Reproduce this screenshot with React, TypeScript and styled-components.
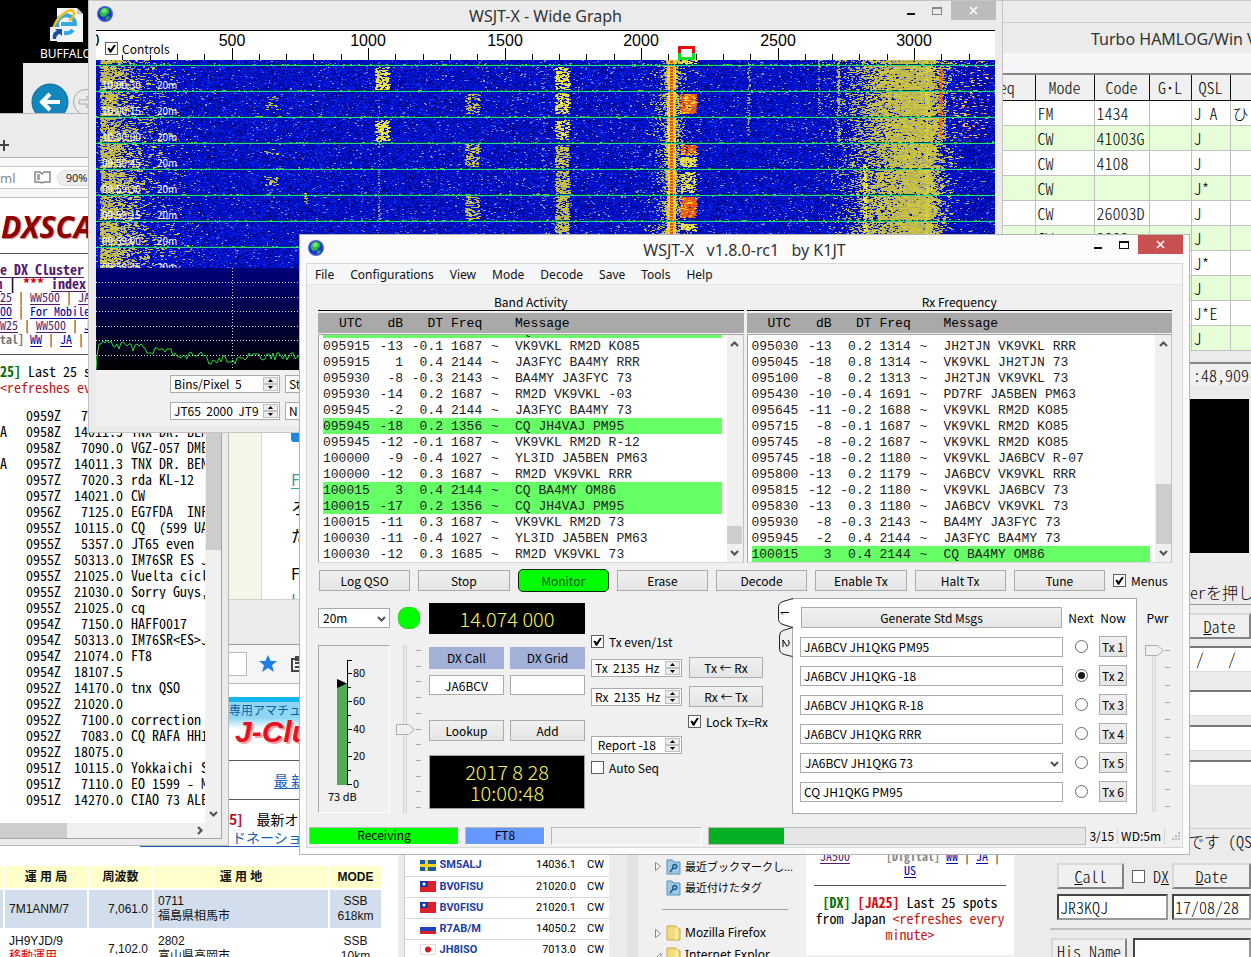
import React, { useState } from "react";
import styled, { createGlobalStyle, css } from "styled-components";

/* ---------- shared type ---------- */

const ui = css`
  font-family: "Noto Sans CJK JP", sans-serif;
  font-size: 12px;
  line-height: 16px;
`;
const caption = css`
  font-family: "Noto Sans", "Noto Sans CJK JP", sans-serif;
`;
const halfWidth = css`
  font-family: "Noto Sans CJK JP", monospace;
  font-feature-settings: "hwid";
`;
const halfWidthLarge = css`
  ${halfWidth}
  font-size: 16px;
  font-weight: 300;
`;

const Global = createGlobalStyle`
  *, *::before, *::after { box-sizing: border-box; }
  html, body { margin: 0; background: #000; }
  body { ${ui} color: #000; overflow: hidden; }
  button, input, select { font: inherit; color: inherit; margin: 0; padding: 0; border-radius: 0; }
  table { border-collapse: collapse; border-spacing: 0; }
  td, th { padding: 0; text-align: left; font-weight: inherit; }
  svg { display: block; flex: none; }
  p { margin: 0; }
`;

/* ---------- desktop and window frames ---------- */

const Desktop = styled.main`
  position: relative;
  width: 100%;
  height: 100vh;
  overflow: hidden;
  background: #000;
`;

const Pane = styled.section<{ $x: number; $y: number; $w?: number; $h?: number; $bg?: string }>`
  position: absolute;
  left: ${(p) => p.$x}px;
  top: ${(p) => p.$y}px;
  ${(p) => (p.$w ? `width: ${p.$w}px;` : "right: 0;")}
  ${(p) => (p.$h ? `height: ${p.$h}px;` : "bottom: 0;")}
  background: ${(p) => p.$bg ?? "#ebebeb"};
  overflow: hidden;
`;

const Frame = styled.section<{ $x: number; $y: number; $w: number; $active?: boolean }>`
  position: absolute;
  left: ${(p) => p.$x}px;
  top: ${(p) => p.$y}px;
  width: ${(p) => p.$w}px;
  display: flex;
  flex-direction: column;
  padding: 0 6px 6px;
  border: 1px solid ${(p) => (p.$active ? "#b4b4b4" : "#c4c4c4")};
  background: ${(p) => (p.$active ? "#fbfbfb" : "#ebebeb")};
`;

const TitleBar = styled.header`
  display: grid;
  grid-template-columns: 1fr auto 1fr;
  height: 28px;
`;
const TitleIcon = styled.div`
  padding: 5px 2px;
`;
const TitleText = styled.h1`
  ${caption}
  margin: 0;
  font-size: 16px;
  line-height: 30px;
  font-weight: 400;
  color: #333;
  white-space: pre;
`;
const WindowButtons = styled.div`
  display: flex;
  justify-content: flex-end;
  align-items: flex-start;
`;
const WindowButton = styled.button<{ $close?: string }>`
  width: ${(p) => (p.$close ? 45 : 27)}px;
  height: 19px;
  border: 0;
  background: ${(p) => p.$close ?? "transparent"};
  display: flex;
  align-items: center;
  justify-content: center;
`;

const Globe = () => (
  <svg width="16" height="16" viewBox="0 0 16 16">
    <circle cx="8" cy="8" r="8" fill="#4a62e0" />
    <circle cx="8" cy="8" r="6.8" fill="#2038c8" />
    <path d="M3 5C4 2 8 1 10 2c2 1 3 3 2 4 0 2-2 2-3 4-1 1-4 1-5 0S2 7 3 5z" fill="#2fb84a" />
    <path d="M5 4c1-2 4-2 5 0 0 2-3 4-4 3s-2-2-1-3z" fill="#6fe868" />
    <path d="M9 11c1-1 3-1 4 0-1 2-2 3-4 3z" fill="#2aa84a" />
    <path d="M2 9c1 0 2 1 2 3-1-1-2-2-2-3z" fill="#101f90" />
  </svg>
);

function Title({ text, active }: { text: string; active?: boolean }) {
  const ink = active ? "#111" : "#888";
  return (
    <TitleBar>
      <TitleIcon><Globe /></TitleIcon>
      <TitleText>{text}</TitleText>
      <WindowButtons>
        <WindowButton aria-label="Minimize">
          <svg width="10" height="10"><path d="M1 7h8v2H1z" fill="#111" /></svg>
        </WindowButton>
        <WindowButton aria-label="Maximize">
          <svg width="11" height="10" shapeRendering="crispEdges">
            <path d="M.5 1.5h9v7h-9z" fill="none" stroke={ink} />
            <path d="M0 1h10v2H0z" fill={ink} />
          </svg>
        </WindowButton>
        <WindowButton aria-label="Close" $close={active ? "#c75050" : "#bcbcbc"}>
          <svg width="9" height="9"><path d="M1 1l7 7M8 1l-7 7" stroke="#fff" strokeWidth="1.6" /></svg>
        </WindowButton>
      </WindowButtons>
    </TitleBar>
  );
}

/* ---------- controls ---------- */

const CheckLabel = styled.label<{ $gap?: number }>`
  display: inline-flex;
  align-items: center;
  gap: ${(p) => p.$gap ?? 5}px;
  height: 13px;
  white-space: nowrap;
`;
const CheckBox = styled.input.attrs({ type: "checkbox" })`
  appearance: none;
  position: relative;
  flex: none;
  width: 13px;
  height: 13px;
  border: 1px solid #606060;
  background: #fff;
  &:checked::after {
    content: "";
    position: absolute;
    inset: 1px;
    background: #000;
    clip-path: polygon(4% 48%, 24% 40%, 40% 62%, 78% 8%, 98% 14%, 46% 96%, 32% 96%);
  }
`;
const Radio = styled.input.attrs({ type: "radio" })`
  appearance: none;
  width: 13px;
  height: 13px;
  border: 1px solid #666;
  border-radius: 50%;
  background: #fff;
  display: grid;
  place-items: center;
  &:checked::after {
    content: "";
    width: 7px;
    height: 7px;
    border-radius: 50%;
    background: #1a1a1a;
  }
`;
const Push = styled.button<{ $on?: boolean; $w?: number }>`
  ${(p) => (p.$w ? `width: ${p.$w}px; flex: none;` : "flex: 1; min-width: 0;")}
  height: 21px;
  line-height: 19px;
  text-align: center;
  white-space: nowrap;
  border: 1px solid #acacac;
  background: linear-gradient(#f0f0f0, #e5e5e5);
  ${(p) =>
    p.$on &&
    css`
      height: 23px;
      margin: -1px 0;
      background: #00ff00;
      border-color: #002800;
      border-radius: 5px;
      color: #04570a;
    `}
`;
const Field = styled.input<{ $center?: boolean }>`
  width: 100%;
  min-width: 0;
  height: 20px;
  padding: 0 3px;
  border: 1px solid #ababab;
  background: #fff;
  text-align: ${(p) => (p.$center ? "center" : "left")};
`;
const SelectWrap = styled.div`
  position: relative;
  height: 20px;
  > svg { position: absolute; right: 4px; top: 8px; pointer-events: none; }
`;
const Select = styled.select`
  appearance: none;
  width: 100%;
  height: 20px;
  padding: 0 4px;
  border: 1px solid #ababab;
  background: #fff;
`;
const Chevron = ({ d = "M1 1l3.5 3.5L8 1" }: { d?: string }) => (
  <svg width="9" height="6"><path d={d} fill="none" stroke="#505050" strokeWidth="2" /></svg>
);
const Spin = styled.div`
  display: flex;
  flex: none;
  width: 91px;
  height: 18px;
  border: 1px solid #ababab;
  background: #fff;
`;
const SpinInput = styled.input`
  flex: 1;
  min-width: 0;
  border: 0;
  padding: 0 3px;
  line-height: 14px;
  background: transparent;
`;
const SpinArrows = styled.div`
  display: flex;
  flex-direction: column;
  width: 15px;
  margin: 1px;
`;
const SpinArrow = styled.button`
  flex: 1;
  min-height: 0;
  display: grid;
  place-items: center;
  border: 1px solid #c0c0c0;
  background: #ececec;
`;
function SpinBox({ value, label }: { value: string; label: string }) {
  return (
    <Spin>
      <SpinInput aria-label={label} defaultValue={value} />
      <SpinArrows>
        <SpinArrow aria-label="Up"><svg width="5" height="3"><path d="M0 3L2.5 0L5 3z" /></svg></SpinArrow>
        <SpinArrow aria-label="Down"><svg width="5" height="3"><path d="M0 0h5L2.5 3z" /></svg></SpinArrow>
      </SpinArrows>
    </Spin>
  );
}

const SliderBox = styled.div`
  position: relative;
  width: 25px;
  height: 168px;
`;
const Range = styled.input.attrs({ type: "range" })`
  position: absolute;
  inset: 0;
  width: 100%;
  height: 100%;
  opacity: 0;
  writing-mode: vertical-lr;
  direction: rtl;
`;
function Slider({ at, label, pwr }: { at: number; label: string; pwr?: boolean }) {
  const start = pwr ? 6 : 5;
  const count = pwr ? 9 : 10;
  const step = (162 - start) / count;
  const ticks = Array.from({ length: count + 1 }, (_, i) => Math.round(start + i * step));
  return (
    <SliderBox>
      <svg width="25" height="168">
        <path d={`M7.5 ${pwr ? start : 0}.5h3V167.5h-3z`} fill="#e7eaea" stroke="#d6d6d6" />
        <path d={ticks.map((t) => `M20 ${t}.5h5`).join("")} stroke="#a8a8a8" />
        <path d={`M.5 ${at - 5}.5h12l6 5l-6 5h-12z`} fill="#f0f0f0" stroke="#acacac" />
      </svg>
      <Range aria-label={label} defaultValue={50} />
    </SliderBox>
  );
}

const VScroll = styled.div`
  flex: none;
  width: 16px;
  display: flex;
  flex-direction: column;
  align-items: center;
  padding: 6px 0;
  background: #f0f0f0;
`;
const Thumb = styled.div<{ $h: number; $push?: number }>`
  width: 15px;
  height: ${(p) => p.$h}px;
  margin: auto 0 ${(p) => p.$push ?? 5}px;
  background: #cdcdcd;
`;

/* ---------- waterfall ---------- */

function mulberry(seed: number) {
  return () => {
    seed = (seed + 0x6d2b79f5) | 0;
    let t = Math.imul(seed ^ (seed >>> 15), 1 | seed);
    t = (t + Math.imul(t ^ (t >>> 7), 61 | t)) ^ t;
    return ((t ^ (t >>> 14)) >>> 0) / 4294967296;
  };
}

const WF_W = 899;
const WF_H = 208;
const periods = [5, 31, 57, 83, 109, 135, 161, 187];
const YELLOW = ["#c4be48", "#b2ae58", "#cfc840"];
const BRIGHT = ["#e6e040", "#d8d058", "#f0ea30"];
const HOT = ["#f06010", "#e8601c", "#f0d020", "#f04a08"];

type Burst = [number, number, number, number, number, string[]];
const bursts: Burst[] = [
  [279, 293, 7, 30, 0.55, BRIGHT], [279, 293, 60, 82, 0.6, BRIGHT],
  [369, 383, 34, 55, 0.32, YELLOW], [369, 383, 84, 107, 0.4, YELLOW], [369, 383, 136, 160, 0.4, YELLOW],
  [459, 473, 7, 30, 0.55, BRIGHT], [459, 473, 33, 54, 0.42, BRIGHT], [459, 473, 60, 80, 0.45, BRIGHT],
  [459, 473, 85, 108, 0.55, YELLOW], [459, 473, 111, 134, 0.55, YELLOW], [459, 473, 136, 160, 0.55, YELLOW],
  [459, 473, 162, 180, 0.55, YELLOW],
  [584, 600, 0, 4, 0.6, BRIGHT], [584, 600, 34, 54, 0.92, HOT], [584, 600, 85, 95, 0.8, HOT], [584, 600, 97, 107, 0.8, BRIGHT],
  [585, 599, 112, 133, 0.5, BRIGHT], [584, 600, 137, 158, 0.92, HOT], [585, 600, 164, 171, 0.7, BRIGHT],
  [168, 181, 36, 50, 0.2, YELLOW], [168, 181, 88, 98, 0.12, YELLOW], [168, 181, 115, 126, 0.3, YELLOW],
  [282, 284, 0, 180, 0.3, ["#8a96c0"]], [447, 449, 0, 180, 0.15, ["#8a96c0"]],
  [651, 654, 0, 80, 0.4, ["#9aa08a"]], [722, 724, 0, 55, 0.5, ["#9aa08a"]], [741, 744, 0, 82, 0.65, ["#b0b070"]],
  [767, 771, 105, 180, 0.7, BRIGHT], [829, 832, 0, 180, 0.85, ["#dcd838", "#d0cc40"]],
  [843, 846, 9, 79, 0.93, ["#e85010", "#f08020", "#e86010"]],
  [846, 850, 10, 79, 0.45, YELLOW], [838, 843, 10, 79, 0.45, YELLOW],
  [856, 893, 1, 78, 0.05, ["#f08030", "#f0a060", "#f0d060"]],
  [208, 211, 133, 144, 0.7, YELLOW],
];

function strength(x: number, y: number) {
  let d = 0;
  if (x >= 4 && x < 20) d = 0.68;
  else if (x >= 20 && x < 120) d = 0.5 * Math.exp(-(x - 20) / 24);
  const m = Math.abs(x - 575);
  const bulge = 0.75 + 0.25 * Math.sin(((y - 5) / 26) * Math.PI * 2 - 1);
  if (m < 30) d = Math.max(d, Math.min(1, 1.1 * Math.exp(-(m - 2) / (7 * bulge))));
  if (x > 690) {
    const r =
      x < 805 ? 0.82 * Math.exp(-Math.pow((805 - x) / 42, 2)) : x < 836 ? 0.9 : 0.75 * Math.exp(-(x - 836) / 9);
    d = Math.max(d, r);
  }
  return d;
}

function paintWaterfall() {
  const rnd = mulberry(1407);
  const out: Record<string, string> = {};
  const pick = (a: string[]) => a[Math.floor(rnd() * a.length)];
  for (let y = 0; y < WF_H; y++) {
    let prev = "";
    let from = 0;
    let x = 0;
    const flush = (to: number) => {
      if (prev) out[prev] = (out[prev] ?? "") + `M${from} ${y}h${to - from}v1h${from - to}z`;
    };
    while (x < WF_W) {
      const wide = x < 80 || x > 750;
      let step = rnd() < 0.5 ? 1 : 2;
      let c = "";
      const hit = bursts.find((b) => x >= b[0] && x < b[1] && y >= b[2] && y < b[3]);
      const m = Math.abs(x - 575);
      const s = strength(x, y);
      if (hit && rnd() < hit[4]) {
        c = pick(hit[5]);
        if (hit[1] - hit[0] > 10) step += 1;
      } else if (m <= 1) {
        c = y % 3 ? "#e84a10" : "#f0b020";
        step = 1;
      } else if (m <= 4) {
        c = rnd() < 0.75 ? pick(BRIGHT) : "#d8a828";
        step = 1;
      } else if (rnd() < s) {
        c = pick(YELLOW);
        if (wide && rnd() < 0.4) step += 2;
      } else {
        const r = rnd();
        const haze = x > 380 && x < 570 ? 0.05 : x > 690 ? 0.03 : 0.025;
        const gloom = x > 865 ? 0.5 : 0.27;
        if (r < gloom) c = "#0008a4";
        else if (r < gloom + 0.06) c = "#00045e";
        else if (r > 1 - haze - s * 0.3) c = rnd() < 0.5 ? "#8c9ad0" : "#6474d8";
        else if (r > 0.88) c = "#1830ea";
      }
      if (periods.includes(y + 1) && rnd() < 0.75) c = rnd() < 0.2 ? "#58d028" : "#063c50";
      if (c !== prev) {
        flush(x);
        prev = c;
        from = x;
      }
      x += step;
    }
    flush(WF_W);
  }
  return Object.entries(out);
}
const waterfallPaths = paintWaterfall();

const trace = (() => {
  const rnd = mulberry(20);
  let d = "M0 102L1 88L3 76";
  for (let x = 5; x < WF_W; x += 2) {
    const base = x < 12 ? 74 : x < 90 ? 75 + ((x - 12) / 78) * 12 : x > 112 && x < 140 ? 92 : 88;
    d += `L${x} ${Math.round(base + (rnd() - 0.5) * 9)}`;
  }
  return d;
})();

const times = ["10:00:30", "10:00:15", "10:00:00", "09:59:45", "09:59:30", "09:59:15", "09:59:00", "09:58:45"];

const GraphFont = styled.g`
  font-family: "Noto Sans CJK JP", sans-serif;
  font-size: 10px;
  fill: #fff;
`;
const ScaleFont = styled.g`
  font-family: "Liberation Sans", sans-serif;
  font-size: 16px;
  text-anchor: middle;
`;
const GraphScale = styled.div`
  position: relative;
  height: 30px;
  border-top: 1px solid #000;
  background: #fff;
`;
const ControlsToggle = styled.div`
  position: absolute;
  left: 9px;
  top: 11px;
  display: flex;
  background: #fff;
`;
const GraphClient = styled.div`
  margin: 1px 1px 0 1px;
  overflow: hidden;
  background: #f0f0f0;
`;
const GraphControls = styled.div`
  display: grid;
  grid-template-columns: 110px 110px;
  gap: 9px 5px;
  padding: 5px 0 6px 74px;
  > div { width: auto; }
`;

function WideGraph() {
  const ticks = Array.from({ length: 32 }, (_, i) => i + 1);
  return (
    <Frame $x={88} $y={0} $w={915}>
      <Title text="WSJT-X - Wide Graph" />
      <GraphClient>
        <GraphScale>
          <svg width={WF_W} height="29">
            <ScaleFont>
              <text x="-1" y="15">0</text>
              {[1, 2, 3, 4, 5, 6].map((i) => (
                <text key={i} x={Math.round(i * 136.5 - 1)} y="15">{i * 500}</text>
              ))}
            </ScaleFont>
            <path
              d={ticks.map((i) => `M${Math.round(i * 27.3) - 1}.5 ${i % 5 ? 23 : 17}V29`).join("")}
              stroke="#000"
            />
            <path d="M583.5 22v-5.5h14V22" fill="#fff" stroke="#e80c10" strokeWidth="3" />
            <path d="M583.5 22v5.5h14V22" fill="#fff" stroke="#10e020" strokeWidth="3" />
          </svg>
          <ControlsToggle>
            <CheckLabel $gap={4}><CheckBox defaultChecked />Controls</CheckLabel>
          </ControlsToggle>
        </GraphScale>
        <svg width={WF_W} height={WF_H} shapeRendering="crispEdges">
          <rect width={WF_W} height={WF_H} fill="#0012d2" />
          {waterfallPaths.map(([color, d]) => <path key={color} d={d} fill={color} />)}
          {periods.map((y) => <rect key={y} y={y} width={WF_W} height="1" fill="#28d890" />)}
          <GraphFont>
            {times.map((t, i) => (
              <React.Fragment key={t}>
                <text x="6" y={29 + i * 26}>{t}</text>
                <text x="61" y={29 + i * 26}>20m</text>
              </React.Fragment>
            ))}
          </GraphFont>
        </svg>
        <svg width={WF_W} height="102">
          <defs>
            <linearGradient id="sky" x1="0" y1="0" x2="0" y2="1">
              <stop offset="0" stopColor="#00007c" />
              <stop offset="1" stopColor="#000" />
            </linearGradient>
          </defs>
          <rect width={WF_W} height="102" fill="url(#sky)" />
          <path
            d={[14, 29, 43, 58, 72, 87].map((y) => `M0 ${y}.5H${WF_W}`).join("") + "M136.5 0V102"}
            stroke="#d8d8e8" strokeDasharray="1 2" shapeRendering="crispEdges"
          />
          <path d={trace} fill="none" stroke="#28d838" />
        </svg>
        <GraphControls>
          <SpinBox label="Bins per pixel" value="Bins/Pixel  5" />
          <SpinBox label="Start" value="Start 0 Hz" />
          <SpinBox label="Split" value="JT65  2000  JT9" />
          <SpinBox label="Averages" value="N Avg 5" />
        </GraphControls>
      </GraphClient>
    </Frame>
  );
}

/* ---------- WSJT-X main window ---------- */

const Client = styled.div`
  border: 1px solid #d6d6d6;
  background: #f0f0f0;
`;
const MenuBar = styled.nav`
  ${caption}
  display: flex;
  gap: 16px;
  height: 21px;
  padding: 1px 8px 0;
  background: #f5f6f7;
  border-bottom: 1px solid #e6e6e6;
`;
const MenuItem = styled.button`
  border: 0;
  background: none;
  line-height: 19px;
  color: #111;
`;
const Work = styled.div`
  padding: 9px 10px 0 11px;
`;
const Lists = styled.div`
  display: flex;
  gap: 3px;
`;
const ListPane = styled.section`
  flex: 1;
  min-width: 0;
`;
const ListTitle = styled.h2`
  margin: 0;
  height: 17px;
  font-size: 12px;
  line-height: 15px;
  font-weight: 400;
  text-align: center;
  border-bottom: 1px solid #000;
`;
const ListHead = styled.div`
  height: 20px;
  margin: 2px 0 1px;
  padding: 2px 5px;
  background: #a9a9a9;
`;
const ListBox = styled.div`
  display: flex;
  height: 229px;
  border: 1px solid #a4a4a4;
  border-bottom-color: #d8d8d8;
  border-right-color: #c0c0c0;
  background: #fff;
`;
const ListRows = styled.div`
  flex: 1;
  display: flex;
  flex-direction: column;
  justify-content: flex-end;
  overflow: hidden;
  padding: 0 5px 0 4px;
`;
const Decodes = styled.table`
  width: 100%;
  table-layout: fixed;
  font-family: "Liberation Mono", monospace;
  font-size: 13px;
  line-height: 14px;
  white-space: pre;
  td, th { height: 16px; padding-top: 2px; }
  td:nth-child(2), td:nth-child(3), th:nth-child(2), th:nth-child(3) { text-align: right; }
`;
const DecodeRow = styled.tr<{ $cq?: boolean }>`
  background: ${(p) => (p.$cq ? "#66ff66" : "transparent")};
  color: #222;
`;
const HeadUtc = styled.th`
  text-indent: 16px;
`;

type Decode = [string, string, string, string, string];
const band: Decode[] = [
  ["095915", "-6", "0.2", "1356", "CQ JH4VAJ PM95"],
  ["095915", "-13", "-0.1", "1687", "VK9VKL RM2D KO85"],
  ["095915", "1", "0.4", "2144", "JA3FYC BA4MY RRR"],
  ["095930", "-8", "-0.3", "2143", "BA4MY JA3FYC 73"],
  ["095930", "-14", "0.2", "1687", "RM2D VK9VKL -03"],
  ["095945", "-2", "0.4", "2144", "JA3FYC BA4MY 73"],
  ["095945", "-18", "0.2", "1356", "CQ JH4VAJ PM95"],
  ["095945", "-12", "-0.1", "1687", "VK9VKL RM2D R-12"],
  ["100000", "-9", "-0.4", "1027", "YL3ID JA5BEN PM63"],
  ["100000", "-12", "0.3", "1687", "RM2D VK9VKL RRR"],
  ["100015", "3", "0.4", "2144", "CQ BA4MY OM86"],
  ["100015", "-17", "0.2", "1356", "CQ JH4VAJ PM95"],
  ["100015", "-11", "0.3", "1687", "VK9VKL RM2D 73"],
  ["100030", "-11", "-0.4", "1027", "YL3ID JA5BEN PM63"],
  ["100030", "-12", "0.3", "1685", "RM2D VK9VKL 73"],
];
const rx: Decode[] = [
  ["095030", "-13", "0.2", "1314", "JH2TJN VK9VKL RRR"],
  ["095045", "-18", "0.8", "1314", "VK9VKL JH2TJN 73"],
  ["095100", "-8", "0.2", "1313", "JH2TJN VK9VKL 73"],
  ["095430", "-10", "-0.4", "1691", "PD7RF JA5BEN PM63"],
  ["095645", "-11", "-0.2", "1688", "VK9VKL RM2D KO85"],
  ["095715", "-8", "-0.1", "1687", "VK9VKL RM2D KO85"],
  ["095745", "-8", "-0.2", "1687", "VK9VKL RM2D KO85"],
  ["095745", "-18", "-0.2", "1180", "VK9VKL JA6BCV R-07"],
  ["095800", "-13", "0.2", "1179", "JA6BCV VK9VKL RRR"],
  ["095815", "-12", "-0.2", "1180", "VK9VKL JA6BCV 73"],
  ["095830", "-13", "0.3", "1180", "JA6BCV VK9VKL 73"],
  ["095930", "-8", "-0.3", "2143", "BA4MY JA3FYC 73"],
  ["095945", "-2", "0.4", "2144", "JA3FYC BA4MY 73"],
  ["100015", "3", "0.4", "2144", "CQ BA4MY OM86"],
];

const DecodeCols = () => (
  <colgroup>
    <col width="48" /><col width="32" /><col width="40" /><col width="8" />
    <col width="40" /><col width="24" /><col />
  </colgroup>
);

function DecodeList({ title, rows, thumb }: { title: string; rows: Decode[]; thumb: number }) {
  return (
    <ListPane>
      <ListTitle>{title}</ListTitle>
      <ListHead>
        <Decodes>
          <DecodeCols />
          <thead>
            <tr><HeadUtc>UTC</HeadUtc><th>dB</th><th>DT</th><th /><th>Freq</th><th /><th>Message</th></tr>
          </thead>
        </Decodes>
      </ListHead>
      <ListBox>
        <ListRows>
          <Decodes>
            <DecodeCols />
            <tbody>
              {rows.map((r, i) => (
                <DecodeRow key={i} $cq={r[4].startsWith("CQ")}>
                  <td>{r[0]}</td><td>{r[1]}</td><td>{r[2]}</td><td /><td>{r[3]}</td><td>~</td><td>{r[4]}</td>
                </DecodeRow>
              ))}
            </tbody>
          </Decodes>
        </ListRows>
        <VScroll>
          <Chevron d="M1 5l3.5-3.5L8 5" />
          <Thumb $h={thumb} $push={6} />
          <Chevron />
        </VScroll>
      </ListBox>
    </ListPane>
  );
}

const ButtonRow = styled.div`
  display: flex;
  align-items: center;
  gap: 8px;
  margin: 7px 1px 0;
`;
const MenusToggle = styled.div`
  width: 58px;
  display: flex;
`;
const Panels = styled.div`
  display: flex;
  align-items: flex-start;
  margin-top: 7px;
`;
const Column = styled.div<{ $w: number; $top: number; $right: number }>`
  flex: none;
  display: flex;
  flex-direction: column;
  width: ${(p) => p.$w}px;
  padding-top: ${(p) => p.$top}px;
  margin-right: ${(p) => p.$right}px;
`;
const MeterFrame = styled.div`
  height: 168px;
  margin-top: 17px;
  border: 1px solid #a8a8a8;
  border-right-color: #fff;
  border-bottom-color: #fff;
`;
const MeterFont = styled.g`
  font-family: "Noto Sans CJK JP", sans-serif;
  font-size: 11px;
`;
const Lamp = styled.div`
  width: 22px;
  height: 22px;
  margin: 0 2px 16px;
  border: 1px solid #20d820;
  border-radius: 9px;
  background: #00ff00;
`;
const Lcd = styled.div<{ $edge?: boolean }>`
  display: flex;
  flex-direction: column;
  justify-content: center;
  height: ${(p) => (p.$edge ? 54 : 31)}px;
  border: ${(p) => (p.$edge ? 1 : 0)}px solid #a0a0a0;
  background: #000;
  color: #f2f25a;
  font-size: 20px;
  font-weight: 300;
  line-height: 21px;
  text-align: center;
`;
const Pair = styled.div<{ $top: number; $bottom?: number }>`
  display: grid;
  grid-template-columns: 1fr 1fr;
  gap: 6px;
  margin: ${(p) => p.$top}px 0 ${(p) => p.$bottom ?? 0}px;
`;
const DxLabel = styled.label`
  height: 22px;
  line-height: 21px;
  text-align: center;
  background: #a3b1d9;
`;
const FreqRow = styled.div<{ $top: number }>`
  display: flex;
  align-items: center;
  gap: 7px;
  margin-top: ${(p) => p.$top}px;
`;
const Indent = styled.div`
  display: flex;
  margin: 8px 0 8px 97px;
`;
const Gap = styled.div<{ $top: number }>`
  display: flex;
  margin-top: ${(p) => p.$top}px;
`;
const TabStrip = styled.div`
  width: 15px;
  flex: none;
  margin-right: -1px;
  z-index: 1;
`;
const TabPage = styled.div`
  flex: 1;
  min-width: 0;
  display: grid;
  grid-template-columns: 1fr 20px 28px;
  column-gap: 8px;
  row-gap: 8px;
  align-items: center;
  justify-items: center;
  margin-right: 8px;
  padding: 8px 9px 11px 7px;
  border: 1px solid #a8a8a8;
  background: #fff;
  > ${SelectWrap} { width: 100%; }
`;
const GenerateSlot = styled.div`
  display: flex;
  width: 100%;
  padding: 0 1px;
`;
const PwrLabel = styled.label`
  height: 16px;
  margin-bottom: 18px;
  text-align: center;
`;
const StatusBar = styled.footer`
  display: flex;
  align-items: center;
  height: 20px;
  margin: 12px 1px 1px 2px;
  gap: 6px;
`;
const StatusCell = styled.div<{ $w: number; $bg?: string }>`
  width: ${(p) => p.$w}px;
  flex: none;
  height: 18px;
  line-height: 13px;
  text-align: center;
  border: 1px solid #b8b8b8;
  border-right-color: #fff;
  border-bottom-color: #fff;
  background: ${(p) => p.$bg ?? "#f0f0f0"};
`;
const ProgressTrack = styled.div`
  flex: 1;
  height: 18px;
  border: 1px solid #bcbcbc;
  background: #e6e6e6;
`;
const ProgressFill = styled.div`
  width: 20%;
  height: 100%;
  background: #06b025;
`;
const StatusText = styled.span`
  margin-left: -3px;
  padding-right: 3px;
  border-right: 1px solid #d4d4d4;
  white-space: nowrap;
`;

function Meter() {
  const at = (v: number) => Math.round(138 - v * 1.385);
  return (
    <MeterFrame>
      <svg width="70" height="166">
        <rect x="18" y="38" width="10" height="101" fill="#55aa55" />
        <path d="M18 33l10 4.5L18 42z" />
        <path
          d={"M28.5 15V139" + [0, 10, 20, 30, 40, 50, 60, 70, 80].map((v) => `M28 ${at(v)}.5h${v % 20 ? 4 : 5}`).join("") + "M28 14.5h5"}
          stroke="#000"
        />
        <MeterFont>
          {[0, 20, 40, 60, 80].map((v) => <text key={v} x="34" y={at(v) + 4}>{v}</text>)}
          <text x="9" y="155">73 dB</text>
        </MeterFont>
      </svg>
    </MeterFrame>
  );
}

const txMessages = ["JA6BCV JH1QKG PM95", "JA6BCV JH1QKG -18", "JA6BCV JH1QKG R-18", "JA6BCV JH1QKG RRR", "JA6BCV JH1QKG 73", "CQ JH1QKG PM95"];

function MainWindow() {
  const [next, setNext] = useState(1);
  return (
    <Frame $x={299} $y={234} $w={891} $active>
      <Title text={"WSJT-X   v1.8.0-rc1   by K1JT"} active />
      <Client>
        <MenuBar>
          {["File", "Configurations", "View", "Mode", "Decode", "Save", "Tools", "Help"].map((m) => (
            <MenuItem key={m}>{m}</MenuItem>
          ))}
        </MenuBar>
        <Work>
          <Lists>
            <DecodeList title="Band Activity" rows={band} thumb={18} />
            <DecodeList title="Rx Frequency" rows={rx} thumb={60} />
          </Lists>
          <ButtonRow>
            {["Log QSO", "Stop", "Monitor", "Erase", "Decode", "Enable Tx", "Halt Tx", "Tune"].map((b) => (
              <Push key={b} $on={b === "Monitor"}>{b}</Push>
            ))}
            <MenusToggle><CheckLabel><CheckBox defaultChecked />Menus</CheckLabel></MenusToggle>
          </ButtonRow>
          <Panels>
            <Column $w={72} $top={10} $right={6}>
              <SelectWrap>
                <Select aria-label="Band"><option>20m</option></Select>
                <Chevron />
              </SelectWrap>
              <Meter />
            </Column>
            <Column $w={25} $top={9} $right={8}>
              <Lamp />
              <Slider at={84} label="Input level" />
            </Column>
            <Column $w={156} $top={5} $right={6}>
              <Lcd>14.074 000</Lcd>
              <Pair $top={13} $bottom={6}>
                <DxLabel htmlFor="dx-call">DX Call</DxLabel>
                <DxLabel htmlFor="dx-grid">DX Grid</DxLabel>
                <Field id="dx-call" $center defaultValue="JA6BCV" />
                <Field id="dx-grid" $center />
              </Pair>
              <Pair $top={19} $bottom={14}>
                <Push>Lookup</Push>
                <Push>Add</Push>
              </Pair>
              <Lcd $edge><span>2017 8 28</span><span>10:00:48</span></Lcd>
            </Column>
            <Column $w={172} $top={37} $right={15}>
              <CheckLabel><CheckBox defaultChecked />Tx even/1st</CheckLabel>
              <FreqRow $top={9}>
                <SpinBox label="Tx frequency" value="Tx  2135  Hz" />
                <Push $w={74}>Tx ← Rx</Push>
              </FreqRow>
              <FreqRow $top={8}>
                <SpinBox label="Rx frequency" value="Rx  2135  Hz" />
                <Push $w={74}>Rx ← Tx</Push>
              </FreqRow>
              <Indent><CheckLabel><CheckBox defaultChecked />Lock Tx=Rx</CheckLabel></Indent>
              <SpinBox label="Report" value=" Report -18" />
              <Gap $top={7}><CheckLabel><CheckBox />Auto Seq</CheckLabel></Gap>
            </Column>
            <TabStrip>
              <svg width="15" height="60" fill="none">
                <path d="M15 .5L5 3.5Q.5 5 .5 9V21Q.5 25 5 26.5L14.5 29.5L5 32.5Q1.5 34 1.5 38V50Q1.5 55 6 56.5L14.5 58.5" stroke="#222" />
                <path d="M15 1.5L5 4.5Q1.5 6 1.5 9V21Q1.5 24 5 25.5L15 28.5z" fill="#fff" />
                <path d="M3 14.5h8M3 14.5l2 2M5 49V42l4 6.5l2-2v-3l-1-1.5" stroke="#000" />
              </svg>
            </TabStrip>
            <TabPage>
              <GenerateSlot><Push>Generate Std Msgs</Push></GenerateSlot>
              <span>Next</span>
              <span>Now</span>
              {txMessages.map((m, i) => (
                <React.Fragment key={m}>
                  {i === 4 ? (
                    <SelectWrap>
                      <Select aria-label="Tx 5 message"><option>{m}</option></Select>
                      <Chevron />
                    </SelectWrap>
                  ) : (
                    <Field aria-label={`Tx ${i + 1} message`} defaultValue={m} />
                  )}
                  <Radio name="next" aria-label={`Next Tx ${i + 1}`} checked={next === i} onChange={() => setNext(i)} />
                  <Push $w={28}>Tx {i + 1}</Push>
                </React.Fragment>
              ))}
            </TabPage>
            <Column $w={25} $top={12} $right={2}>
              <PwrLabel>Pwr</PwrLabel>
              <Slider at={6} label="Power" pwr />
            </Column>
          </Panels>
        </Work>
        <StatusBar>
          <StatusCell $w={150} $bg="#00ff00">Receiving</StatusCell>
          <StatusCell $w={80} $bg="#6699ff">FT8</StatusCell>
          <StatusCell $w={151} />
          <ProgressTrack role="progressbar" aria-valuenow={3} aria-valuemax={15}><ProgressFill /></ProgressTrack>
          <StatusText>3/15</StatusText>
          <StatusText>WD:5m</StatusText>
          <svg width="10" height="12" shapeRendering="crispEdges">
            <path d="M7 2h2v2H7zM4 5h2v2H4zM7 5h2v2H7zM1 8h2v2H1zM4 8h2v2H4zM7 8h2v2H7z" fill="#bcbcbc" />
          </svg>
        </StatusBar>
      </Client>
    </Frame>
  );
}

/* ---------- desktop icon and Internet Explorer corner ---------- */

const Shortcut = styled.a`
  position: absolute;
  left: 24px;
  top: 6px;
  width: 84px;
  display: flex;
  flex-direction: column;
  align-items: center;
  gap: 4px;
  color: #fff;
  text-decoration: none;
  font-family: "Noto Sans", sans-serif;
`;
const ExplorerBar = styled.div`
  display: flex;
  gap: 4px;
  padding: 20px 8px;
`;

function ExplorerCorner() {
  return (
    <>
      <Shortcut href="#buffalo">
        <svg width="34" height="36">
          <path d="M8 2h20l6 6v28H8z" fill="#f4f4f4" />
          <path d="M28 2v6h6z" fill="#c8c8c8" />
          <path d="M24 24a9 9 0 1 1 2-6H12" fill="none" stroke="#35a8e0" strokeWidth="4" />
          <path d="M4 24C6 12 20 2 24 5c3 3-2 9-4 10" fill="none" stroke="#f0c020" strokeWidth="2.5" />
          <path d="M1 21h14v14H1z" fill="#eef2f8" />
          <path d="M4 33c-1-6 2-8 4-8L6 23h7v7l-2-2c-2 0-4 2-4 5z" fill="#1c4f9c" />
        </svg>
        BUFFALO
      </Shortcut>
      <Pane $x={23} $y={63} $w={80} $h={60}>
        <ExplorerBar>
          <svg width="38" height="38">
            <circle cx="19" cy="19" r="18" fill="#1286bd" stroke="#0b6a98" />
            <path d="M29 19H12M19 11l-8 8l8 8" fill="none" stroke="#fff" strokeWidth="4" />
          </svg>
          <svg width="26" height="38">
            <circle cx="13" cy="19" r="12.5" fill="none" stroke="#a8a8a8" />
            <path d="M6 17h8v-4l6 6l-6 6v-4H6z" fill="none" stroke="#a8a8a8" />
          </svg>
        </ExplorerBar>
      </Pane>
    </>
  );
}

/* ---------- DXSCAPE browser window ---------- */

const Browser = styled.section`
  position: absolute;
  left: -60px;
  top: 113px;
  width: 289px;
  padding: 0 6px 6px 0;
  border: 1px solid #b8b8b8;
  background: #ebebeb;
`;
const TabLine = styled.div`
  height: 44px;
  padding: 19px 0 0 58px;
  border-bottom: 1px solid #b4b4b4;
`;
const UrlLine = styled.div`
  ${caption}
  display: flex;
  align-items: center;
  height: 40px;
  padding-left: 59px;
  background: #f7f7f7;
  border-bottom: 1px solid #c0c0c0;
`;
const UrlBox = styled.div`
  display: flex;
  align-items: center;
  flex: 1;
  gap: 18px;
  height: 23px;
  margin-right: 20px;
  border: solid #c4c4c4;
  border-width: 1px 0;
  background: #fff;
  color: #888;
  font-size: 13px;
`;
const Zoom = styled.button`
  margin-left: -12px;
  width: 40px;
  height: 16px;
  border: 1px solid #ddd;
  border-radius: 8px;
  background: #eee;
  color: #222;
  font-size: 11px;
  line-height: 14px;
`;
const PageRow = styled.div`
  display: flex;
  height: 625px;
  border-right: 1px solid #a0a4ac;
`;
const Page = styled.div`
  flex: 1;
  min-width: 0;
  overflow: hidden;
  background: #fff;
  padding-left: 59px;
  white-space: nowrap;
`;
const Logo = styled.div`
  height: 55px;
  padding-left: 1px;
  font: italic 700 30px/58px "Open Sans", sans-serif;
  color: #900000;
  text-shadow: 1px 1px 1px #c08080;
`;
const Crumbs = styled.div<{ $size: number; $bold?: boolean; $back?: number }>`
  ${halfWidth}
  margin-left: -${(p) => p.$back ?? 0}px;
  font-size: ${(p) => p.$size}px;
  font-weight: ${(p) => (p.$bold ? 700 : 400)};
  line-height: 14px;
  white-space: pre;
`;
const A = styled.a<{ $seen?: boolean; $c?: string }>`
  color: ${(p) => p.$c ?? (p.$seen ? "#551a6b" : "#00009c")};
  text-decoration: underline;
  text-underline-offset: 2px;
`;
const Rule = styled.hr<{ $m?: string }>`
  height: 1px;
  margin: ${(p) => p.$m ?? "0"};
  border: 0;
  background: #555;
`;
const Ink = styled.span<{ $c: string; $b?: boolean }>`
  color: ${(p) => p.$c};
  font-weight: ${(p) => (p.$b ? 700 : 400)};
`;
const Notice = styled.p<{ $center?: boolean }>`
  ${halfWidth}
  font-size: 14px;
  text-align: ${(p) => (p.$center ? "center" : "left")};
  white-space: pre;
`;
const Spots = styled.table`
  ${halfWidth}
  table-layout: fixed;
  width: 320px;
  margin-top: 12px;
  font-size: 14px;
  line-height: 16px;
  white-space: pre;
  td { height: 16px; overflow: hidden; }
  td:nth-child(3) { text-align: right; padding-right: 8px; }
`;
const HScroll = styled.div`
  display: flex;
  align-items: center;
  justify-content: space-between;
  height: 16px;
  padding-right: 18px;
  border: solid #a0a4ac;
  border-width: 0 1px 1px 0;
  background: #f0f0f0;
`;
const HThumb = styled.div`
  width: 126px;
  height: 15px;
  background: #cdcdcd;
`;
const DxScroll = styled(VScroll)`
  justify-content: space-between;
  > div { margin: 0; }
`;

const spots: [string, string, string, string][] = [
  ["", "0959Z", "7144.0", ""],
  ["A", "0958Z", "14011.3", "TNX DR. BEN"],
  ["", "0958Z", "7090.0", "VGZ-057 DME"],
  ["A", "0957Z", "14011.3", "TNX DR. BEN"],
  ["", "0957Z", "7020.3", "rda KL-12"],
  ["", "0957Z", "14021.0", "CW"],
  ["", "0956Z", "7125.0", "EG7FDA  INF"],
  ["", "0955Z", "10115.0", "CQ  (599 UA"],
  ["", "0955Z", "5357.0", "JT65 even"],
  ["", "0955Z", "50313.0", "IM76SR ES J"],
  ["", "0955Z", "21025.0", "Vuelta cicl"],
  ["", "0955Z", "21030.0", "Sorry Guys,"],
  ["", "0955Z", "21025.0", "cq"],
  ["", "0954Z", "7150.0", "HAFF0017"],
  ["", "0954Z", "50313.0", "IM76SR<ES>J"],
  ["", "0954Z", "21074.0", "FT8"],
  ["", "0954Z", "18107.5", ""],
  ["", "0952Z", "14170.0", "tnx QSO"],
  ["", "0952Z", "21020.0", ""],
  ["", "0952Z", "7100.0", "correction"],
  ["", "0952Z", "7083.0", "CQ RAFA HH1"],
  ["", "0952Z", "18075.0", ""],
  ["", "0951Z", "10115.0", "Yokkaichi S"],
  ["", "0951Z", "7110.0", "EO 1599 - M"],
  ["", "0951Z", "14270.0", "CIAO 73 ALE"],
];

function DxBrowser() {
  return (
    <Browser>
      <TabLine>
        <svg width="12" height="24"><path d="M0 12h10M5 7v11" stroke="#444" strokeWidth="2" /></svg>
      </TabLine>
      <UrlLine>
        <UrlBox>
          <span>ml</span>
          <svg width="17" height="13" fill="none" stroke="#888" strokeWidth="1.5">
            <path d="M1 1h5l2 2l2-2h6v10h-6l-2 1l-2-1H1zM3 4h3M3 6h3M3 8h3" />
          </svg>
          <Zoom>90%</Zoom>
        </UrlBox>
      </UrlLine>
      <PageRow>
        <Page>
          <Logo>DXSCAPE</Logo>
          <Rule $m="0 0 8px" />
          <Crumbs $size={14} $bold><A $seen href="#c">e DX Cluster</A></Crumbs>
          <Crumbs $size={14} $bold $back={5}><A $seen href="#m">m</A> | <Ink $c="#e00000" $b>***</Ink> <A $seen href="#i">index</A></Crumbs>
          <Crumbs $size={12}><A $seen href="#25">25</A> | <A $seen href="#500">WW500</A> | <A $seen href="#ja">JA25</A></Crumbs>
          <Crumbs $size={12}><A href="#00">00</A> | <A href="#mob">For Mobile</A></Crumbs>
          <Crumbs $size={12}><A $seen href="#w25">W25</A> | <A $seen href="#w500">WW500</A> | <A href="#j">JA</A></Crumbs>
          <Crumbs $size={12}><Ink $c="#777" $b>tal]</Ink> <A href="#ww">WW</A> | <A href="#jj">JA</A> |</Crumbs>
          <Rule $m="8px 0" />
          <Notice><Ink $c="#0a700a" $b>25]</Ink> Last 25 spots</Notice>
          <Notice><Ink $c="#c01818">{"<refreshes every"}</Ink></Notice>
          <Spots>
            <colgroup><col width="26" /><col width="40" /><col width="65" /><col /></colgroup>
            <tbody>
              {spots.map((s, i) => (
                <tr key={i}>{s.map((c, j) => <td key={j}>{c}</td>)}</tr>
              ))}
            </tbody>
          </Spots>
        </Page>
        <DxScroll>
          <Thumb $h={346} />
          <Chevron />
        </DxScroll>
      </PageRow>
      <HScroll>
        <HThumb />
        <svg width="6" height="9"><path d="M1 1l3.5 3.5L1 8" fill="none" stroke="#505050" strokeWidth="2" /></svg>
      </HScroll>
    </Browser>
  );
}

/* ---------- browser strips between the windows ---------- */

const Strip = styled.div`
  display: flex;
  height: 169px;
`;
const StripMargin = styled.div`
  width: 33px;
  background: #f5f5e8;
  border-right: 1px solid #d8d8d0;
`;
const StripText = styled.div`
  flex: 1;
  height: 169px;
  padding: 0 0 0 29px;
  background: #fff;
  font-size: 16px;
  line-height: 28px;
  overflow: hidden;
  white-space: nowrap;
`;
const BlueTag = styled.div`
  width: 20px;
  height: 12px;
  margin-bottom: 23px;
  border-radius: 0 0 3px 3px;
  background: #1f86e0;
`;
const Later = styled.div`
  margin-top: 12px;
  line-height: 24px;
`;
const BlankBar = styled.div`
  height: 46px;
  border-top: 1px solid #d0d0c8;
  border-bottom: 1px solid #999;
`;
const StarBar = styled.div`
  display: flex;
  align-items: center;
  gap: 12px;
  height: 39px;
  border-bottom: 1px solid #b8b8b8;
  background: #f5f5f5;
`;
const UrlEnd = styled.div`
  width: 18px;
  height: 24px;
  border: 1px solid #bbb;
  border-left: 0;
  background: #fff;
`;
const Cluster = styled.div`
  height: 200px;
  padding-top: 13px;
  background: #fff;
  white-space: nowrap;
  font-size: 14px;
`;
const Banner = styled.div`
  height: 50px;
  border-top: 5px solid #10b4ee;
  background: linear-gradient(#8ed6f4 35%, #fff 60%);
  color: #0a5ea8;
  font-size: 12px;
`;
const BannerName = styled.div`
  margin-left: 6px;
  font: italic 700 30px/28px "Liberation Sans", sans-serif;
  color: #e81020;
  text-shadow: 2px 2px 1px #f0a0a0;
`;
const ClusterLine = styled.p<{ $pad: number }>`
  padding: 11px 0 11px ${(p) => p.$pad}px;
`;

function Strips() {
  return (
    <Pane $x={229} $y={430} $w={90} $h={424}>
      <Strip>
        <StripMargin />
        <StripText>
          <BlueTag />
          <A $c="#3a9c9c" href="#f">F</A>
          <div>ろ</div>
          <div>た</div>
          <Later>F</Later>
          <A $c="#3a9c9c" href="#l">L</A>
        </StripText>
      </Strip>
      <BlankBar />
      <StarBar>
        <UrlEnd />
        <svg width="18" height="18"><path d="M9 0l2.7 6H18l-5 4.2L15 17l-6-4l-6 4l2-6.8L0 6h6.3z" fill="#1f7fe8" /></svg>
        <svg width="18" height="18" fill="none" stroke="#444" strokeWidth="2">
          <path d="M3 4h13v12H3zM7 2h6v3H7zM6 8h8M6 12h8" />
        </svg>
      </StarBar>
      <Cluster>
        <Banner>
          専用アマチュア無線
          <BannerName>J-Cluster</BannerName>
        </Banner>
        <Rule $m="13px 0 0" />
        <ClusterLine $pad={45}><A $c="#1560b8" href="#n">最 新</A></ClusterLine>
        <Rule />
        <ClusterLine $pad={0}><Ink $c="#c01020" $b>5]</Ink>　最新オンエア</ClusterLine>
      </Cluster>
    </Pane>
  );
}

/* ---------- bottom left: activity table ---------- */

const Activity = styled.table`
  width: 385px;
  margin: 19px 0 0 -2px;
  border-collapse: separate;
  border-spacing: 2px 2px;
  font-family: "Liberation Sans", "Noto Sans CJK JP", sans-serif;
  font-size: 12px;
  line-height: 15px;
  color: #111;
  th {
    height: 22px;
    background: #ffffcc;
    font-weight: 700;
    text-align: center;
  }
  td { height: 38px; padding: 0 4px; }
  td:nth-child(3) { text-align: right; }
  td:nth-child(5) { text-align: center; }
  td:first-child { padding: 0; }
  tr:nth-child(odd) > td { background: #d3deec; }
`;
const Donation = styled.a`
  position: absolute;
  left: 140px;
  top: 829px;
  width: 160px;
  height: 18px;
  padding-left: 92px;
  overflow: hidden;
  font-size: 14px;
  text-decoration: none;
  background: #fff;
  border-bottom: 1px solid #1560b8;
  color: #1560b8;
  white-space: nowrap;
`;

function ActivityPage() {
  return (
    <Pane $x={0} $y={845} $w={398} $bg="#fff">
      <Activity>
        <colgroup><col width="3" /><col width="82" /><col width="63" /><col width="174" /><col width="51" /></colgroup>
        <thead><tr><th /><th>運 用 局</th><th>周波数</th><th>運 用 地</th><th>MODE</th></tr></thead>
        <tbody>
          <tr><td /><td>7M1ANM/7</td><td>7,061.0</td><td>0711<br />福島県相馬市</td><td>SSB<br />618km</td></tr>
          <tr><td /><td>JH9YJD/9<br /><Ink $c="#e00000">移動運用</Ink></td><td>7,102.0</td><td>2802<br />富山県高岡市</td><td>SSB<br />10km</td></tr>
        </tbody>
      </Activity>
    </Pane>
  );
}

/* ---------- bottom centre ---------- */

const CallList = styled.table`
  width: 205px;
  margin: 5px 0 0 6px;
  background: #fff;
  border-left: 1px solid #ccc;
  font-family: Roboto, sans-serif;
  font-size: 11px;
  tr { border-bottom: 1px solid #d8d8d8; }
  td { height: 21px; white-space: nowrap; }
  td:first-child { padding-left: 15px; width: 35px; }
  td:nth-child(2) { font-weight: 700; color: #1c40a0; }
  td:nth-child(3) { text-align: right; padding-right: 11px; }
  td:nth-child(4) { width: 22px; }
`;
const flags: Record<string, React.ReactNode> = {
  se: <><path d="M0 0h16v11H0z" fill="#1c5aa0" /><path d="M5 0h3v11H5zM0 4h16v3H0z" fill="#f8d020" /></>,
  tw: <><path d="M0 0h16v11H0z" fill="#e02028" /><path d="M0 0h8v6H0z" fill="#1838a0" /><circle cx="4" cy="3" r="1.5" fill="#fff" /></>,
  ru: <><path d="M0 0h16v11H0z" fill="#f4f4f4" /><path d="M0 4h16v4H0z" fill="#2040c0" /><path d="M0 8h16v3H0z" fill="#d82028" /></>,
  jp: <><path d="M.5.5h15v10H.5z" fill="#fff" stroke="#ddd" /><circle cx="8" cy="5.5" r="3" fill="#d81828" /></>,
};
const calls = [
  ["se", "SM5ALJ", "14036.1"], ["tw", "BV0FISU", "21020.0"], ["tw", "BV0FISU", "21020.1"],
  ["ru", "R7AB/M", "14050.2"], ["jp", "JH8ISO", "7013.0"],
];
const Tree = styled.ul`
  list-style: none;
  margin: 0;
  padding: 11px 0 0 16px;
  font-family: "Noto Sans", "Noto Sans CJK JP", sans-serif;
  font-size: 12px;
`;
const TreeItem = styled.li<{ $small?: boolean }>`
  display: flex;
  align-items: center;
  gap: 4px;
  height: ${(p) => (p.$small ? 21 : 22)}px;
  font-size: ${(p) => (p.$small ? 11 : 12)}px;
  white-space: nowrap;
`;
const TreeRule = styled.li`
  height: 1px;
  margin: 11px 0 12px 8px;
  width: 126px;
  background: #a0a0a0;
`;
const Twist = ({ open, hide }: { open?: boolean; hide?: boolean }) => (
  <svg width="8" height="9"><path d={hide ? "" : open ? "M7 2v6H1z" : "M1.5.5l5 4l-5 4z"} fill="#fff" stroke="#888" /></svg>
);
const Folder = ({ blue }: { blue?: boolean }) => (
  <svg width="15" height="16">
    <path d={blue ? "M1 1h5l2 2h6v12H1z" : "M1 1h8l5 3v11H1z"} fill={blue ? "#9cc8e4" : "#f4dc78"} stroke={blue ? "#5890b8" : "#c8a840"} />
    {blue ? <path d="M4 13l3-4M7 6.5a2 2 0 1 1 2 3a2 2 0 0 1-2-3z" stroke="#1c5a8c" strokeWidth="1.5" fill="none" /> : <path d="M9 4l3-2v12l-3 1z" fill="#fbeeb0" />}
  </svg>
);
const SidePage = styled.div`
  margin-left: 8px;
  padding: 4px 8px 0;
  height: 110px;
  background: #fff;
`;
const SideLinks = styled.p`
  ${halfWidth}
  font-size: 12px;
  line-height: 14px;
  text-align: center;
  white-space: pre;
`;

function BottomCentre() {
  return (
    <>
      <Pane $x={398} $y={850} $w={230}>
        <CallList>
          <tbody>
            {calls.map(([f, c, q], i) => (
              <tr key={i}><td><svg width="16" height="11">{flags[f]}</svg></td><td>{c}</td><td>{q}</td><td>CW</td></tr>
            ))}
          </tbody>
        </CallList>
      </Pane>
      <Pane $x={627} $y={850} $w={11} $bg="#e2e2e2" />
      <Pane $x={638} $y={845} $w={160} $bg="#f0f0f0">
        <Tree>
          <TreeItem $small><Twist /><Folder blue />最近ブックマークし...</TreeItem>
          <TreeItem $small><Twist hide /><Folder blue />最近付けたタグ</TreeItem>
          <TreeRule />
          <TreeItem><Twist /><Folder />Mozilla Firefox</TreeItem>
          <TreeItem><Twist open /><Folder />Internet Explor</TreeItem>
        </Tree>
      </Pane>
      <Pane $x={798} $y={845} $w={216} $bg="#f0f0f0">
        <SidePage>
          <SideLinks><A $seen href="#5">JA500</A>      <Ink $c="#888" $b>[Digital]</Ink> <A href="#w">WW</A> | <A href="#a">JA</A> |</SideLinks>
          <SideLinks><A href="#us">US</A></SideLinks>
          <Rule $m="8px 0" />
          <Notice $center><Ink $c="#0a700a" $b>[DX]</Ink> <Ink $c="#d01010" $b>[JA25]</Ink> Last 25 spots</Notice>
          <Notice $center>from Japan <Ink $c="#c01818">{"<refreshes every"}</Ink></Notice>
          <Notice $center><Ink $c="#c01818">{"minute>"}</Ink></Notice>
        </SidePage>
      </Pane>
      <Pane $x={1014} $y={850} $w={36} $bg="#ebebeb" />
    </>
  );
}

/* ---------- Turbo HAMLOG ---------- */

const HamTop = styled.div`
  height: 23px;
  border-top: 1px solid #ccc;
  border-bottom: 1px solid #ccc;
`;
const HamTitle = styled.h1`
  ${caption}
  margin: 0;
  padding-left: 88px;
  height: 30px;
  font-size: 16px;
  line-height: 32px;
  font-weight: 400;
  color: #333;
  white-space: nowrap;
`;
const HamMenu = styled.div`
  height: 22px;
  background: #f5f6f7;
  border-bottom: 2px solid #888;
`;
const HamTable = styled.table`
  ${halfWidthLarge}
  table-layout: fixed;
  width: 340px;
  margin-left: -40px;
  line-height: 22px;
  background: #fff;
  white-space: pre;
  td { height: 25px; padding-left: 2px; border: solid #c0c0c0; border-width: 0 1px 1px 0; overflow: hidden; }
  th { height: 25px; text-align: center; background: #f0f0f0; border: solid #111; border-width: 0 1px 1px 0; overflow: hidden; }
  tbody tr:nth-child(even) { background: #e6ffd8; }
`;
const HamStatus = styled.div`
  ${halfWidthLarge}
  height: 26px;
  margin-top: 11px;
  padding-left: 190px;
  border-top: 2px solid #888;
  border-bottom: 1px solid #bbb;
  line-height: 22px;
  background: #f0f0f0;
  white-space: nowrap;
`;
const log = [
  ["", "FM", "1434", "", "J A", "ひら"], ["", "CW", "41003G", "", "J", ""], ["", "CW", "4108", "", "J", ""],
  ["", "CW", "", "", "J*", ""], ["", "CW", "26003D", "", "J", ""], ["", "CW", "2803", "", "J", ""],
  ["", "CW", "", "", "J*", ""], ["", "CW", "", "", "J", ""], ["", "CW", "", "", "J*E", ""], ["", "CW", "", "", "J", ""],
];
const Black = styled.div`
  height: 154px;
  margin: 14px 2px 27px 0;
  background: #000;
`;
const Hint = styled.div`
  ${halfWidthLarge}
  height: 25px;
  margin-bottom: 8px;
  padding-left: 10px;
  line-height: 24px;
  border-bottom: 1px solid #999;
  white-space: nowrap;
`;
const Raised = styled.button<{ $w?: number }>`
  ${halfWidthLarge}
  ${(p) => (p.$w ? `width: ${p.$w}px;` : "width: 100%;")}
  flex: none;
  height: 26px;
  line-height: 22px;
  background: #f0f0f0;
  border: 2px outset #d8d8d8;
`;
const Blank = styled.div<{ $top: number }>`
  ${halfWidthLarge}
  height: 26px;
  margin-top: ${(p) => p.$top}px;
  line-height: 21px;
  white-space: pre;
  border-top: 2px solid #777;
  border-bottom: 1px solid #ddd;
  background: #fff;
`;
const Foot = styled.div`
  ${halfWidthLarge}
  margin-top: 42px;
  padding-left: 8px;
  border-top: 1px solid #ccc;
  line-height: 24px;
  white-space: nowrap;
`;
const EntryGrid = styled.div`
  display: grid;
  grid-template-columns: 67px 40px 1fr;
  gap: 5px 4px;
  padding: 12px 0 0 7px;
`;
const EntryField = styled.input<{ $wide?: boolean }>`
  ${halfWidthLarge}
  grid-column: ${(p) => (p.$wide ? "span 2" : "auto")};
  width: 100%;
  min-width: 0;
  height: 26px;
  padding: 0 1px;
  border: 2px inset #999;
  background: #fff;
`;
const EntryName = styled.div`
  display: flex;
  gap: 6px;
  margin-top: 8px;
  padding: 8px 0 0 1px;
  border-top: 2px solid #c0c0c0;
`;
const DxCheck = styled(CheckLabel)`
  ${halfWidthLarge}
  height: 26px;
  padding-left: 4px;
`;

function Hamlog() {
  return (
    <>
      <Pane $x={1003} $y={0} $h={398}>
        <HamTop />
        <HamTitle>Turbo HAMLOG/Win Ver5</HamTitle>
        <HamMenu />
        <HamTable>
          <colgroup><col width="72" /><col width="59" /><col width="55" /><col width="42" /><col width="39" /><col /></colgroup>
          <thead><tr><th>Freq</th><th>Mode</th><th>Code</th><th>G･L</th><th>QSL</th><th /></tr></thead>
          <tbody>{log.map((r, i) => <tr key={i}>{r.map((c, j) => <td key={j}>{c}</td>)}</tr>)}</tbody>
        </HamTable>
        <HamStatus>:48,909-</HamStatus>
      </Pane>
      <Pane $x={1180} $y={385} $h={470}>
        <Black />
        <Hint>erを押し</Hint>
        <Raised>&nbsp;<u>D</u>ate</Raised>
        <Blank $top={7}>{"  /   /"}</Blank>
        <Blank $top={18} />
        <Blank $top={9} />
        <Blank $top={9} />
        <Foot>です (QSL</Foot>
      </Pane>
      <Pane $x={1050} $y={851}>
        <EntryGrid>
          <Raised $w={67}><u>C</u>all</Raised>
          <DxCheck $gap={8}><CheckBox /><span>D<u>X</u></span></DxCheck>
          <Raised><u>D</u>ate</Raised>
          <EntryField $wide aria-label="Call" defaultValue="JR3KQJ" />
          <EntryField aria-label="Date" defaultValue="17/08/28" />
        </EntryGrid>
        <EntryName>
          <Raised $w={76}>His Name</Raised>
          <EntryField aria-label="His name" />
        </EntryName>
      </Pane>
    </>
  );
}

export default function App() {
  return (
    <Desktop>
      <Global />
      <ExplorerCorner />
      <Strips />
      <ActivityPage />
      <Donation href="#donation">ドネーションのお願い</Donation>
      <BottomCentre />
      <Hamlog />
      <DxBrowser />
      <WideGraph />
      <MainWindow />
    </Desktop>
  );
}
